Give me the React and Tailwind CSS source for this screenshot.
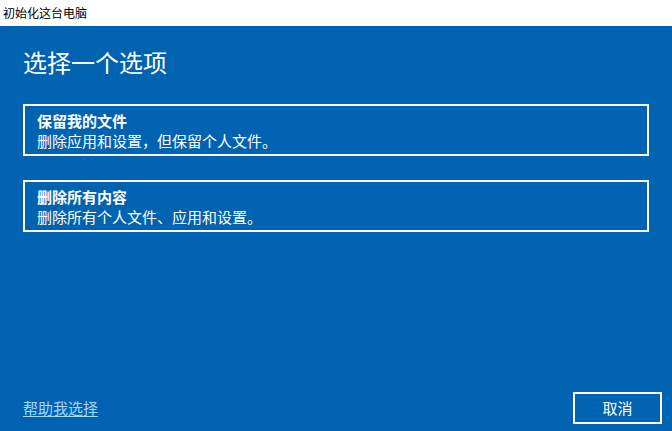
export default function App() {
  const font = { fontFamily: '"Noto Sans CJK SC", "Noto Sans", sans-serif' };
  return (
    <div className="w-[672px] h-[431px] flex flex-col overflow-hidden" style={font}>
      <div className="h-[26px] bg-white flex items-center px-[3px] text-[12px] text-black leading-none">
        初始化这台电脑
      </div>
      <div className="flex-1 bg-[#0063b1] flex flex-col text-white">
        <div className="px-[23px] flex flex-col">
          <h1 className="mt-[20px] text-[24px] leading-[32px] font-normal">选择一个选项</h1>
          <button className="mt-[26px] border-2 border-white text-left pl-[12px] pt-[5px] pb-[3px] flex flex-col">
            <span className="text-[15px] leading-[20px] font-bold">保留我的文件</span>
            <span className="text-[15px] leading-[20px]">删除应用和设置，但保留个人文件。</span>
          </button>
          <button className="mt-[24px] border-2 border-white text-left pl-[12px] pt-[5px] pb-[3px] flex flex-col">
            <span className="text-[15px] leading-[20px] font-bold">删除所有内容</span>
            <span className="text-[15px] leading-[20px]">删除所有个人文件、应用和设置。</span>
          </button>
        </div>
        <div className="flex-1" />
        <div className="flex items-center justify-between pl-[23px] pr-[10px] pb-[7px]">
          <a className="text-[15px] leading-[20px] text-[#a6d8ff] underline underline-offset-2">帮助我选择</a>
          <button className="w-[89px] h-[32px] border-2 border-white text-[15px] text-white flex items-center justify-center">
            取消
          </button>
        </div>
      </div>
    </div>
  );
}
